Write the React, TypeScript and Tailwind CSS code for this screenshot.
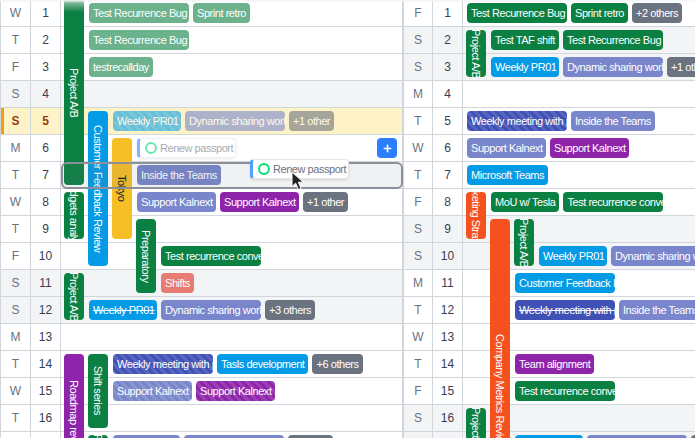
import React from 'react'
import { Plus } from 'lucide-react'

const GREEN = 'bg-[#0b8043]'
const BLUE = 'bg-[#039be5]'
const INDIGO = 'bg-[#7986cb]'
const DARK = 'bg-[#3f51b5]'
const PURPLE = 'bg-[#8e24aa]'
const RED = 'bg-[#e67c73]'
const GRAY = 'bg-[#6b7280]'
const ORANGE = 'bg-[#f4511e]'
const YELLOW = 'bg-[#f6bf26]'

const STRIPE =
  'bg-[repeating-linear-gradient(45deg,rgba(255,255,255,0.12)_0,rgba(255,255,255,0.12)_3px,transparent_3px,transparent_6px)]'

// these two labels come out a pixel or two wider than in the picture
const WEEKLY = 'w-[68px]'
const SUPPORT = 'w-[79px]'

type ChipData = {
  text: string
  color: string
  width?: string
  striped?: boolean
  strike?: boolean
  faded?: boolean
}

type RowData = { row: number; lanes: number; chips: ChipData[] }

type BarData = {
  text: string
  color: string
  lane: number
  from: number
  to: number
  dark?: boolean
  cutTop?: boolean
}

const leftDays = 'WTFSSMTWTFSSMTWTFSSMTW'.split('')
const rightDays = 'FSSMTWTFSSMTWTFSSMTWTF'.split('')

const leftWeekend = [4, 11, 12, 18, 19]
const rightWeekend = [2, 3, 9, 10, 16, 17]

const leftBars: BarData[] = [
  { text: 'Project A/B', color: GREEN, lane: 0, from: 1, to: 7, cutTop: true },
  { text: 'Customer Feedback Review', color: BLUE, lane: 1, from: 5, to: 10 },
  { text: 'Tokyo', color: YELLOW, lane: 2, from: 6, to: 9, dark: true },
  { text: 'Preparatory', color: GREEN, lane: 3, from: 9, to: 11 },
  { text: 'Budgets analysis', color: GREEN, lane: 0, from: 8, to: 9 },
  { text: 'Project A/B', color: GREEN, lane: 0, from: 11, to: 12 },
  { text: 'Roadmap review', color: PURPLE, lane: 0, from: 14, to: 18 },
  { text: 'Shift series', color: GREEN, lane: 1, from: 14, to: 16 },
  { text: 'Project A/B', color: GREEN, lane: 1, from: 17, to: 18 },
]

const leftRows: RowData[] = [
  {
    row: 1,
    lanes: 1,
    chips: [
      { text: 'Test Recurrence Bug', color: GREEN, faded: true },
      { text: 'Sprint retro', color: GREEN, faded: true },
    ],
  },
  { row: 2, lanes: 1, chips: [{ text: 'Test Recurrence Bug', color: GREEN, faded: true }] },
  { row: 3, lanes: 1, chips: [{ text: 'testrecallday', color: GREEN, faded: true }] },
  {
    row: 5,
    lanes: 2,
    chips: [
      { text: 'Weekly PR01', color: BLUE, width: WEEKLY, striped: true, faded: true },
      { text: 'Dynamic sharing workflow', color: INDIGO, faded: true },
      { text: '+1 other', color: GRAY, faded: true },
    ],
  },
  { row: 7, lanes: 3, chips: [{ text: 'Inside the Teams', color: INDIGO }] },
  {
    row: 8,
    lanes: 3,
    chips: [
      { text: 'Support Kalnext', color: INDIGO, width: SUPPORT },
      { text: 'Support Kalnext', color: PURPLE, width: SUPPORT },
      { text: '+1 other', color: GRAY },
    ],
  },
  { row: 10, lanes: 4, chips: [{ text: 'Test recurrence conversion', color: GREEN }] },
  { row: 11, lanes: 4, chips: [{ text: 'Shifts', color: RED }] },
  {
    row: 12,
    lanes: 1,
    chips: [
      { text: 'Weekly PR01', color: BLUE, width: WEEKLY, strike: true },
      { text: 'Dynamic sharing workflow', color: INDIGO },
      { text: '+3 others', color: GRAY },
    ],
  },
  {
    row: 14,
    lanes: 2,
    chips: [
      { text: 'Weekly meeting with partners', color: DARK, striped: true },
      { text: 'Tasls development', color: BLUE },
      { text: '+6 others', color: GRAY },
    ],
  },
  {
    row: 15,
    lanes: 2,
    chips: [
      { text: 'Support Kalnext', color: INDIGO, width: SUPPORT, striped: true },
      { text: 'Support Kalnext', color: PURPLE, width: SUPPORT, striped: true },
    ],
  },
  {
    row: 17,
    lanes: 2,
    chips: [
      { text: 'Inside Teams', color: INDIGO },
      { text: 'Dynamic sharing workflow', color: INDIGO },
      { text: '+1 other', color: GRAY },
    ],
  },
]

const rightBars: BarData[] = [
  { text: 'Project A/B', color: GREEN, lane: 0, from: 2, to: 3 },
  { text: 'Marketing Strategy', color: ORANGE, lane: 0, from: 8, to: 9 },
  { text: 'Company Metrics Review', color: ORANGE, lane: 1, from: 9, to: 21 },
  { text: 'Project A/B', color: GREEN, lane: 2, from: 9, to: 10 },
  { text: 'Project A/B', color: GREEN, lane: 0, from: 16, to: 17 },
]

const rightRows: RowData[] = [
  {
    row: 1,
    lanes: 0,
    chips: [
      { text: 'Test Recurrence Bug', color: GREEN },
      { text: 'Sprint retro', color: GREEN },
      { text: '+2 others', color: GRAY },
    ],
  },
  {
    row: 2,
    lanes: 1,
    chips: [
      { text: 'Test TAF shift', color: GREEN },
      { text: 'Test Recurrence Bug', color: GREEN },
    ],
  },
  {
    row: 3,
    lanes: 1,
    chips: [
      { text: 'Weekly PR01', color: BLUE, width: WEEKLY },
      { text: 'Dynamic sharing workflow', color: INDIGO },
      { text: '+1 others', color: GRAY },
    ],
  },
  {
    row: 5,
    lanes: 0,
    chips: [
      { text: 'Weekly meeting with partners', color: DARK, striped: true },
      { text: 'Inside the Teams', color: INDIGO },
    ],
  },
  {
    row: 6,
    lanes: 0,
    chips: [
      { text: 'Support Kalnext', color: INDIGO, width: SUPPORT },
      { text: 'Support Kalnext', color: PURPLE, width: SUPPORT },
    ],
  },
  { row: 7, lanes: 0, chips: [{ text: 'Microsoft Teams', color: BLUE }] },
  {
    row: 8,
    lanes: 1,
    chips: [
      { text: 'MoU w/ Tesla', color: GREEN },
      { text: 'Test recurrence conversion', color: GREEN },
    ],
  },
  {
    row: 10,
    lanes: 3,
    chips: [
      { text: 'Weekly PR01', color: BLUE, width: WEEKLY },
      { text: 'Dynamic sharing workflow', color: INDIGO },
    ],
  },
  { row: 11, lanes: 2, chips: [{ text: 'Customer Feedback Review', color: BLUE }] },
  {
    row: 12,
    lanes: 2,
    chips: [
      { text: 'Weekly meeting with partners', color: DARK, strike: true },
      { text: 'Inside the Teams', color: INDIGO },
    ],
  },
  { row: 14, lanes: 2, chips: [{ text: 'Team alignment', color: PURPLE }] },
  { row: 15, lanes: 2, chips: [{ text: 'Test recurrence conversion', color: GREEN }] },
  {
    row: 17,
    lanes: 2,
    chips: [
      { text: 'Weekly PR01', color: BLUE, width: WEEKLY },
      { text: 'Dynamic sharing workflow', color: INDIGO },
      { text: '+1 other', color: GRAY },
    ],
  },
]

function Chip({ chip }: { chip: ChipData }) {
  return (
    <div
      className={`relative h-5 max-w-[100px] shrink-0 overflow-hidden rounded px-1 text-[11px] leading-5 tracking-[-0.45px] whitespace-nowrap text-white
        ${chip.color} ${chip.width ?? ''} ${chip.faded ? 'opacity-60' : ''} ${chip.strike ? 'line-through' : ''}`}
    >
      {chip.striped && <div className={`absolute inset-0 ${STRIPE}`} />}
      <span className="relative">{chip.text}</span>
    </div>
  )
}

function TaskChip({ faded }: { faded?: boolean }) {
  return (
    <div
      className={`flex h-5 w-[99px] items-center gap-[3px] rounded border border-l-[3px] border-gray-200 bg-white pl-[5px] text-[11px] tracking-[-0.45px] whitespace-nowrap text-gray-500 shadow-sm
        ${faded ? 'border-l-blue-500 opacity-60' : 'border-l-blue-400'}`}
    >
      <span className="h-3 w-3 shrink-0 rounded-full border-2 border-green-400" />
      Renew passport
    </div>
  )
}

function Bar({ bar }: { bar: BarData }) {
  return (
    <div
      className={`mb-1 ml-[3px] flex w-5 items-center justify-center overflow-hidden text-[11px] tracking-[-0.45px] whitespace-nowrap [writing-mode:vertical-rl]
        ${bar.cutTop ? 'rounded-b bg-[linear-gradient(to_bottom,#a3cbb4,#0b8043_12px)]' : `mt-[3px] rounded ${bar.color}`}
        ${bar.dark ? 'text-gray-900' : 'text-white'}`}
      style={{ gridColumn: 3 + bar.lane, gridRow: `${bar.from} / ${bar.to + 1}` }}
    >
      {bar.text}
    </div>
  )
}

function Month({
  days,
  weekend,
  today,
  bars,
  rows,
  dayWidth,
  children,
}: {
  days: string[]
  weekend: number[]
  today?: number
  bars: BarData[]
  rows: RowData[]
  dayWidth: string
  children?: React.ReactNode
}) {
  return (
    <div
      className={`grid shrink-0 auto-rows-[27px] border-l border-gray-300 ${dayWidth}`}
    >
      {days.map((day, i) => {
        const n = i + 1
        const isToday = n === today
        const bg = isToday ? 'bg-[#fef3c7]' : weekend.includes(n) ? 'bg-[#f3f4f6]' : 'bg-white'
        return (
          <React.Fragment key={n}>
            <div
              className={`flex items-center justify-center border-r border-b border-gray-300 text-xs ${bg}
                ${isToday ? 'font-bold text-[#92400e] shadow-[inset_3px_0_0_#f59e0b]' : 'text-gray-500'}`}
              style={{ gridColumn: 1, gridRow: n }}
            >
              {day}
            </div>
            <div
              className={`flex items-center justify-center border-r border-b border-gray-300 text-xs ${bg}
                ${isToday ? 'font-bold text-[#92400e]' : 'text-gray-700'}`}
              style={{ gridColumn: 2, gridRow: n }}
            >
              {n}
            </div>
            <div
              className={`border-b border-gray-300 ${bg}`}
              style={{ gridColumn: '3 / -1', gridRow: n }}
            />
          </React.Fragment>
        )
      })}
      {bars.map((bar) => (
        <Bar key={`${bar.text}-${bar.from}`} bar={bar} />
      ))}
      {rows.map((row) => (
        <div
          key={row.row}
          className="mt-[3px] flex h-5 gap-1 pl-1"
          style={{ gridColumn: `${3 + row.lanes} / -1`, gridRow: row.row }}
        >
          {row.chips.map((chip, i) => (
            <Chip key={i} chip={chip} />
          ))}
        </div>
      ))}
      {children}
    </div>
  )
}

export default function App() {
  return (
    <div
      className="relative flex h-[438px] w-[695px] overflow-hidden bg-white font-['Liberation_Sans',sans-serif]"
    >
      <Month
        days={leftDays}
        weekend={leftWeekend}
        today={5}
        bars={leftBars}
        rows={leftRows}
        dayWidth="w-[403px] border-r grid-cols-[30px_30px_repeat(4,24px)_minmax(0,1fr)]"
      >
        {/* dragged-from slot */}
        <div
          className="mt-[3px] flex h-5 pl-1"
          style={{ gridColumn: '6 / -1', gridRow: 6 }}
        >
          <TaskChip faded />
        </div>
        <button
          className="mt-[3px] mr-[5px] flex h-5 w-5 items-center justify-center self-start justify-self-end rounded bg-blue-500 text-white"
          style={{ gridColumn: '7 / -1', gridRow: 6 }}
        >
          <Plus size={11} strokeWidth={3.5} />
        </button>
      </Month>
      <Month
        days={rightDays}
        weekend={rightWeekend}
        bars={rightBars}
        rows={rightRows}
        dayWidth="w-[403px] grid-cols-[29px_30px_repeat(4,24px)_minmax(0,1fr)]"
      />

      {/* drop target outline */}
      <div className="absolute top-[162px] left-[61px] h-[27px] w-[342px] rounded-md border-2 border-[#8b909b] bg-gray-500/10" />

      {/* dragged chip */}
      <div className="absolute top-[159px] left-[250px]">
        <TaskChip />
      </div>

      {/* cursor */}
      <svg className="absolute top-[171px] left-[291px]" width="15" height="20" viewBox="0 0 15 20">
        <path d="M1 1 L1 15.5 L4.7 12.2 L7.4 18.5 L10 17.4 L7.4 11.2 L12.3 11.2 Z" fill="#222" stroke="#fff" strokeWidth="1" />
      </svg>

      <div className="absolute inset-x-0 top-0 h-[3px] bg-gradient-to-b from-gray-100 to-transparent" />
    </div>
  )
}
